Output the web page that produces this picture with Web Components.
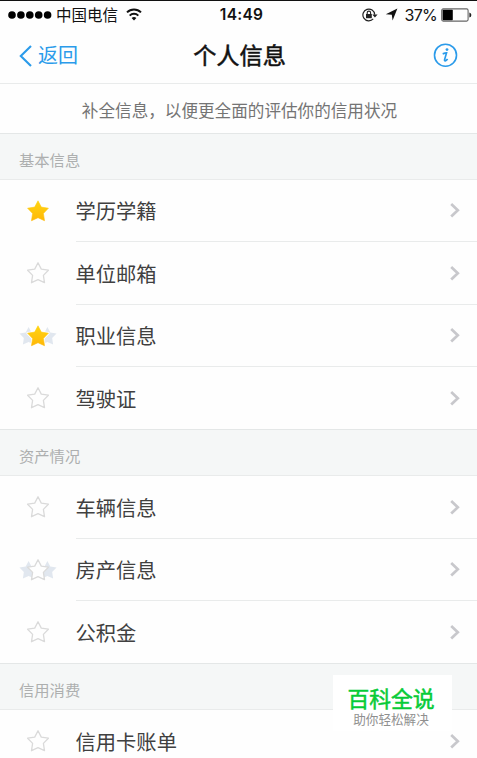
<!DOCTYPE html>
<html lang="zh-CN">
<head>
<meta charset="utf-8">
<meta name="viewport" content="width=device-width, initial-scale=1">
<title>个人信息</title>
<style>
  html, body {
    margin: 0;
    height: 758px;
    overflow: hidden;
    background: #fefefe;
  }
</style>
</head>
<body>
<info-app>
  <status-bar carrier="中国电信" time="14:49" battery="37%"></status-bar>
  <nav-bar back="返回">个人信息</nav-bar>
  <notice-bar>补全信息，以便更全面的评估你的信用状况</notice-bar>
  <info-section label="基本信息">
    <info-row star="full">学历学籍</info-row>
    <info-row>单位邮箱</info-row>
    <info-row star="full" multi>职业信息</info-row>
    <info-row>驾驶证</info-row>
  </info-section>
  <info-section label="资产情况">
    <info-row>车辆信息</info-row>
    <info-row multi>房产信息</info-row>
    <info-row>公积金</info-row>
  </info-section>
  <info-section label="信用消费">
    <info-row>信用卡账单</info-row>
  </info-section>
  <corner-badge slot="overlay">
    百科全说
    <span slot="sub">助你轻松解决</span>
  </corner-badge>
</info-app>

<script>
// ==========================================
// 1. APP SHELL
// ==========================================
class InfoApp extends HTMLElement {
  constructor() {
    super();
    this.attachShadow({ mode: 'open' });
    this.shadowRoot.innerHTML = `
      <style>
        :host {
          --blue: #2b9bea;
          --line: #e9ebeb;
          display: flex;
          flex-direction: column;
          position: relative;
          width: 477px;
          height: 758px;
          overflow: hidden;
          background: #fefefe;
          font-family: "Noto Sans CJK SC", sans-serif;
          color: #404040;
        }
      </style>
      <slot></slot>
      <slot name="overlay"></slot>
    `;
  }
}

// ==========================================
// 2. STATUS BAR
// ==========================================
class StatusBar extends HTMLElement {
  constructor() {
    super();
    this.attachShadow({ mode: 'open' });
    this.shadowRoot.innerHTML = `
      <style>
        :host {
          display: grid;
          grid-template-columns: 1fr auto 1fr;
          align-items: center;
          flex: none;
          box-sizing: border-box;
          height: 28px;
          padding: 0 5px 0 8px;
          border-top: 1px solid #111;
          color: #111;
          font-size: 15.5px;
          line-height: 26px;
        }
        .left, .right { display: flex; align-items: center; }
        .right { justify-content: flex-end; }
        .carrier { margin: 0 8px 0 4px; padding-bottom: 2px; line-height: 24px; }
        .time {
          font-family: Inter, sans-serif;
          font-weight: 600;
          font-size: 15.5px;
          letter-spacing: 0.25px;
          padding-left: 3px;
        }
        .percent { font-family: Inter, sans-serif; font-size: 16px; margin: 0 4px 0 7px; letter-spacing: -0.75px; }
        svg { display: block; flex: none; }
        .arrow { margin-left: 7px; }
      </style>
      <div class="left">
        <svg width="44" height="10" viewBox="0 0 44 10" fill="#000">
          <circle cx="4" cy="5" r="3.8"/><circle cx="12.9" cy="5" r="3.8"/><circle cx="21.8" cy="5" r="3.8"/>
          <circle cx="30.7" cy="5" r="3.8"/><circle cx="39.6" cy="5" r="3.8"/>
        </svg>
        <span class="carrier"></span>
        <svg width="16" height="14" viewBox="0 0 16 14" fill="none" stroke="#111" stroke-width="2">
          <path d="M1 4.4A10 10 0 0 1 15 4.4"/>
          <path d="M3.7 7.6A6.1 6.1 0 0 1 12.3 7.6"/>
          <path d="M8 12.6L5.6 10.1A3.4 3.4 0 0 1 10.4 10.1Z" fill="#111" stroke="none"/>
        </svg>
      </div>
      <span class="time"></span>
      <div class="right">
        <svg width="16" height="14" viewBox="0 0 16 14" fill="none" stroke="#222" stroke-width="1.2">
          <path d="M11.2 10.9A5.9 5.9 0 1 1 12.7 6.6"/>
          <path d="M10.3 6.4H15.6L12.9 9.6Z" fill="#222" stroke="none"/>
          <rect x="4" y="6" width="5.8" height="4.2" fill="#222" stroke="none"/>
          <path d="M5.2 6.2V4.8A1.7 1.7 0 0 1 8.6 4.8V6.2" stroke-width="1.1"/>
        </svg>
        <svg class="arrow" width="13" height="13" viewBox="0 0 13 13" fill="#111">
          <path d="M12.4 0.6L7.6 12.4L6.8 6.8L0.8 6.2Z"/>
        </svg>
        <span class="percent"></span>
        <svg width="31" height="14" viewBox="0 0 31 14">
          <rect x=".7" y=".9" width="26.4" height="12.2" rx="1.5" fill="none" stroke="#666" stroke-width="1.1"/>
          <rect x="1.6" y="1.8" width="10.2" height="10.4" rx=".6" fill="#000"/>
          <path d="M28.4 4.4A2.7 2.7 0 0 1 28.4 9.6Z" fill="#222"/>
        </svg>
      </div>
    `;
  }

  connectedCallback() {
    this.shadowRoot.querySelector('.carrier').textContent = this.getAttribute('carrier');
    this.shadowRoot.querySelector('.time').textContent = this.getAttribute('time');
    this.shadowRoot.querySelector('.percent').textContent = this.getAttribute('battery');
  }
}

// ==========================================
// 3. NAVIGATION BAR
// ==========================================
class NavBar extends HTMLElement {
  constructor() {
    super();
    this.attachShadow({ mode: 'open' });
    this.shadowRoot.innerHTML = `
      <style>
        :host {
          display: grid;
          grid-template-columns: 1fr auto 1fr;
          align-items: center;
          flex: none;
          box-sizing: border-box;
          height: 56px;
          padding: 0 19px;
          border-bottom: 1px solid var(--line);
        }
        .back {
          display: flex;
          align-items: center;
          gap: 5px;
          color: var(--blue);
          font-size: 20px;
          line-height: 30px;
        }
        .back-label { padding-bottom: 2px; }
        .title {
          font-size: 23.2px;
          line-height: 34px;
          padding: 0 0 4px 2px;
          color: #111;
          -webkit-text-stroke: 0.5px #111;
        }
        .info { justify-self: end; }
        svg { display: block; }
      </style>
      <div class="back">
        <svg width="14" height="22" viewBox="0 0 14 22" fill="none" stroke="currentColor" stroke-width="2.1">
          <path d="M12 1L1.8 11L12 21"/>
        </svg>
        <span class="back-label"></span>
      </div>
      <div class="title"><slot></slot></div>
      <svg class="info" width="25" height="25" viewBox="0 0 25 25" fill="none" stroke="#2b9bea">
        <circle cx="12.5" cy="12.2" r="11" stroke-width="1.6"/>
        <circle cx="14" cy="6.6" r="1.4" fill="#2b9bea" stroke="none"/>
        <path d="M9.7 10.9C11.1 10.4 12.3 10 13.5 9.9L11.6 16.6C11.2 18.6 12.9 18.3 14.6 16" stroke-width="1.7"/>
      </svg>
    `;
  }

  connectedCallback() {
    this.shadowRoot.querySelector('.back-label').textContent = this.getAttribute('back');
  }
}

// ==========================================
// 4. NOTICE LINE
// ==========================================
class NoticeBar extends HTMLElement {
  constructor() {
    super();
    this.attachShadow({ mode: 'open' });
    this.shadowRoot.innerHTML = `
      <style>
        :host {
          display: flex;
          justify-content: center;
          align-items: center;
          flex: none;
          box-sizing: border-box;
          height: 49px;
          padding-top: 3px;
          padding-left: 2px;
          font-size: 16.6px;
          color: #747474;
          white-space: nowrap;
        }
      </style>
      <slot></slot>
    `;
  }
}

// ==========================================
// 5. SECTION WITH GREY HEADING
// ==========================================
class InfoSection extends HTMLElement {
  constructor() {
    super();
    this.attachShadow({ mode: 'open' });
    this.shadowRoot.innerHTML = `
      <style>
        :host { display: block; flex: none; }
        .heading {
          display: flex;
          align-items: center;
          box-sizing: border-box;
          height: 46.7px;
          padding: 5px 19px 0;
          background: #f5f7f7;
          border-top: 1px solid #e4e7e7;
          border-bottom: 1px solid var(--line);
          font-size: 15.3px;
          color: #adafaf;
        }
      </style>
      <div class="heading"></div>
      <slot></slot>
    `;
  }

  connectedCallback() {
    this.shadowRoot.querySelector('.heading').textContent = this.getAttribute('label');
  }
}

// ==========================================
// 6. ROW
// ==========================================
const STAR = 'M0 -10.2L3.3 -3.9L10.4 -2.8L5.4 2.4L6.5 9.7L0 6.7L-6.5 9.7L-5.4 2.4L-10.4 -2.8L-3.3 -3.9Z';

class InfoRow extends HTMLElement {
  constructor() {
    super();
    this.attachShadow({ mode: 'open' });
    this.shadowRoot.innerHTML = `
      <style>
        :host {
          display: flex;
          box-sizing: border-box;
          height: 62.45px;
        }
        .icon {
          display: flex;
          align-items: center;
          justify-content: center;
          flex: none;
          width: 75.5px;
        }
        .body {
          display: flex;
          align-items: center;
          justify-content: space-between;
          flex: 1;
          padding-right: 16.5px;
          border-bottom: 1px solid var(--line);
          font-size: 20.3px;
          line-height: 30px;
        }
        :host(:last-child) .body { border-bottom-color: transparent; }
        svg { display: block; }
        .side { display: none; fill: #e1e7ef; }
        :host([multi]) .side { display: block; }
        .star {
          fill: #fefefe;
          stroke: #dadada;
          stroke-width: 1.3;
          stroke-linejoin: round;
        }
        :host([star="full"]) .star { fill: url(#gold); stroke: url(#gold); stroke-width: .6; }
        :host([star="full"]) .halo { stroke: #fefefe; stroke-width: 2.4; }
      </style>
      <div class="icon">
        <svg width="40" height="24" viewBox="-20 -12 40 24">
          <defs>
            <linearGradient id="gold" x1="0" y1="0" x2="0" y2="1">
              <stop offset="0" stop-color="#ffd411"/>
              <stop offset="1" stop-color="#ffb808"/>
            </linearGradient>
          </defs>
          <path class="side" d="${STAR}" transform="translate(-9.4 0) scale(.88)"/>
          <path class="side" d="${STAR}" transform="translate(9.4 0) scale(.88)"/>
          <path class="halo" d="${STAR}" fill="#fefefe" stroke-linejoin="round"/>
          <path class="star" d="${STAR}"/>
        </svg>
      </div>
      <div class="body">
        <slot></slot>
        <svg width="12" height="16" viewBox="0 0 12 16" fill="none" stroke="#c8c8cc" stroke-width="2.7">
          <path d="M2.2 2L8.8 8.3L2.2 14.6"/>
        </svg>
      </div>
    `;
  }
}

// ==========================================
// 7. CORNER BADGE, FLOATS OVER THE LIST
// ==========================================
class CornerBadge extends HTMLElement {
  constructor() {
    super();
    this.attachShadow({ mode: 'open' });
    this.shadowRoot.innerHTML = `
      <style>
        :host {
          position: absolute;
          left: 333px;
          top: 675px;
          display: flex;
          flex-direction: column;
          align-items: center;
          box-sizing: border-box;
          width: 119px;
          height: 56px;
          padding: 11px 3px 0 0;
          background: #fff;
          font-family: "Liberation Sans", "Noto Sans CJK SC", sans-serif;
        }
        .name {
          font-size: 21.8px;
          line-height: 27px;
          color: #06cb37;
          -webkit-text-stroke: 0.5px #06cb37;
        }
        .sub {
          font-size: 12.6px;
          line-height: 15px;
          color: #8f8f8f;
        }
      </style>
      <div class="name"><slot></slot></div>
      <div class="sub"><slot name="sub"></slot></div>
    `;
  }
}

customElements.define('info-app', InfoApp);
customElements.define('status-bar', StatusBar);
customElements.define('nav-bar', NavBar);
customElements.define('notice-bar', NoticeBar);
customElements.define('info-section', InfoSection);
customElements.define('info-row', InfoRow);
customElements.define('corner-badge', CornerBadge);
</script>
</body>
</html>
